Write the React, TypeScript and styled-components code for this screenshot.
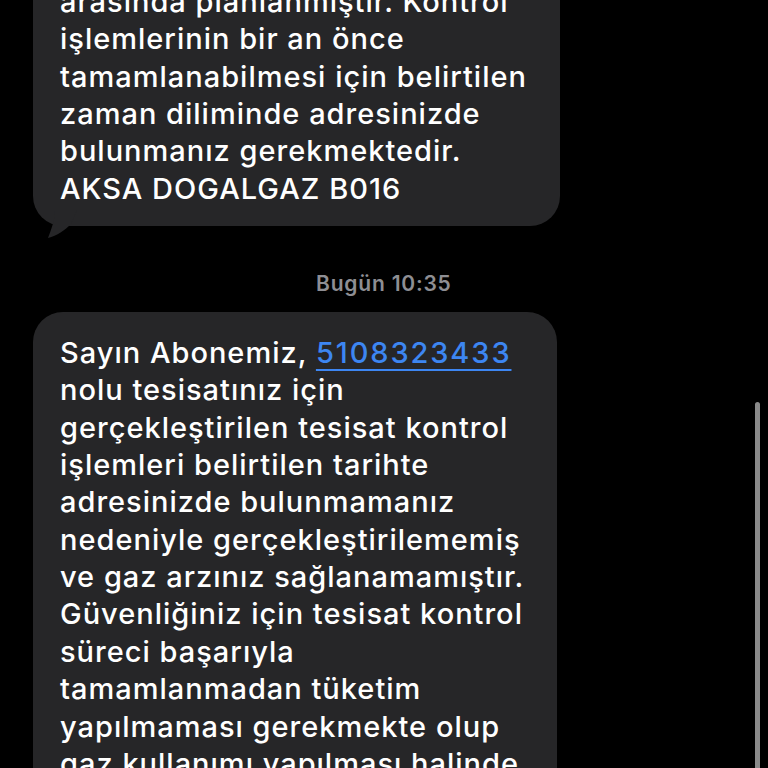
import React from "react";
import styled, { createGlobalStyle } from "styled-components";

const GlobalStyle = createGlobalStyle`
  html, body {
    margin: 0;
    padding: 0;
    background: #000000;
  }
  body {
    font-family: Inter, "Noto Sans", "Liberation Sans", sans-serif;
    -webkit-font-smoothing: antialiased;
  }
`;

const Screen = styled.div`
  position: relative;
  width: 768px;
  height: 768px;
  overflow: hidden;
  background: #000000;
`;

const Thread = styled.div`
  display: flex;
  flex-direction: column;
  align-items: flex-start;
  padding-left: 33px;
  margin-top: -34px;
`;

const Bubble = styled.div<{ $width: number; $top: number }>`
  position: relative;
  width: ${(p) => p.$width}px;
  box-sizing: border-box;
  background: #262628;
  border-radius: 30px;
  padding: ${(p) => p.$top}px 20px 19px 27px;
  color: #ffffff;
  font-size: 29px;
  font-weight: 500;
  line-height: 37.35px;
  letter-spacing: 1px;
`;

const Line = styled.div`
  white-space: nowrap;
`;

const Tail = styled.svg`
  position: absolute;
  left: 8px;
  bottom: -12px;
  width: 36px;
  height: 28px;
`;

const Stamp = styled.div`
  align-self: stretch;
  margin: 45px 0 15px;
  padding-left: 283px;
  color: #8e8e93;
  font-size: 21px;
  font-weight: 600;
  line-height: 26px;
  letter-spacing: 0.8px;
`;

const Phone = styled.span`
  color: #3d86f2;
  letter-spacing: 1.9px;
  text-decoration: underline;
  text-underline-offset: 6px;
  text-decoration-thickness: 2px;
`;

const ScrollBar = styled.div`
  position: absolute;
  right: 8px;
  top: 402px;
  width: 5px;
  height: 400px;
  border-radius: 3px;
  background: #8a8a8a;
`;

const firstLines = [
  "arasında planlanmıştır. Kontrol",
  "işlemlerinin bir an önce",
  "tamamlanabilmesi için belirtilen",
  "zaman diliminde adresinizde",
  "bulunmanız gerekmektedir.",
  "AKSA DOGALGAZ B016",
];

const secondLines = [
  "nolu tesisatınız için",
  "gerçekleştirilen tesisat kontrol",
  "işlemleri belirtilen tarihte",
  "adresinizde bulunmamanız",
  "nedeniyle gerçekleştirilememiş",
  "ve gaz arzınız sağlanamamıştır.",
  "Güvenliğiniz için tesisat kontrol",
  "süreci başarıyla",
  "tamamlanmadan tüketim",
  "yapılmaması gerekmekte olup",
  "gaz kullanımı yapılması halinde",
  "oluşabilecek",
];

export default function App() {
  return (
    <Screen>
      <GlobalStyle />
      <Thread>
        <Bubble $width={527} $top={17}>
          {firstLines.map((l) => (
            <Line key={l}>{l}</Line>
          ))}
          <Tail viewBox="0 0 36 28">
            <path d="M14 0 C14 10 10 20 7 28 C16 26 24 20 30 14 L36 0 Z" fill="#262628" />
          </Tail>
        </Bubble>
        <Stamp>Bugün 10:35</Stamp>
        <Bubble $width={524} $top={22}>
          <Line>
            Sayın Abonemiz, <Phone>5108323433</Phone>
          </Line>
          {secondLines.map((l) => (
            <Line key={l}>{l}</Line>
          ))}
        </Bubble>
      </Thread>
      <ScrollBar />
    </Screen>
  );
}
